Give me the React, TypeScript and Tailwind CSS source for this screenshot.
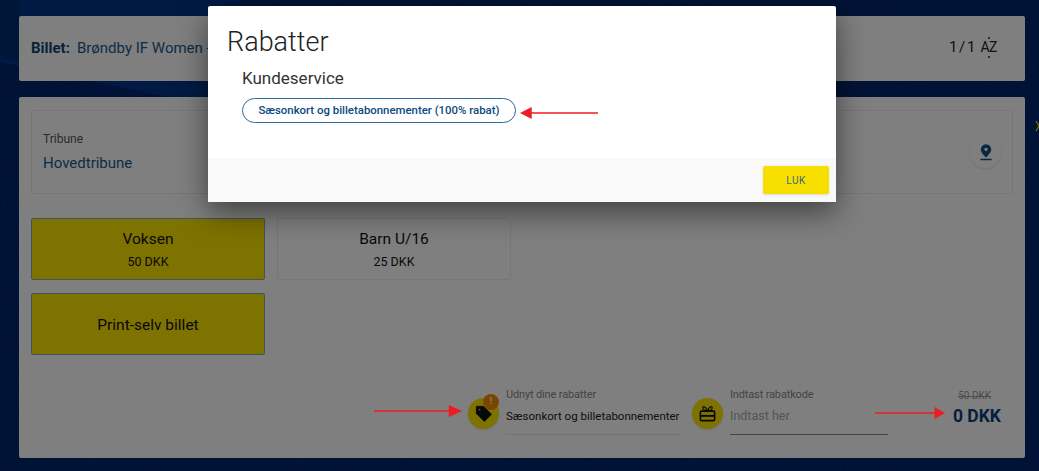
import React from 'react';

const font = "font-['Roboto','Liberation_Sans',sans-serif]";

const Arrow = ({ className, flip = false }: { className: string; flip?: boolean }) => (
  <svg
    viewBox="0 0 80 14"
    preserveAspectRatio="none"
    className={`absolute ${className}`}
    style={flip ? { transform: 'scaleX(-1)' } : undefined}
  >
    <path d="M0 6.2 L68 6.2 L68 1 L80 7 L68 13 L68 7.8 L0 7.8 Z" fill="#ed1c24" />
  </svg>
);

const TagIcon = () => (
  <svg viewBox="0 0 24 24" className="w-[19px] h-[19px]">
    <path
      fillRule="evenodd"
      d="M3 3 L12 3 L22 13 L13 22 L3 12 Z M7 5.600 a1.400 1.400 0 1 0 0.010 0 Z"
      fill="#111"
      stroke="#111"
      strokeWidth="1.2"
      strokeLinejoin="round"
    />
  </svg>
);

const GiftIcon = () => (
  <svg viewBox="0 0 24 24" className="w-[19px] h-[19px]" fill="none" stroke="#111" strokeWidth="2">
    <rect x="3" y="9" width="18" height="12" rx="1.5" />
    <path d="M3 15 H21" strokeWidth="2.4" />
    <path
      d="M12 8.500 C10 4 6.500 2 6 4.500 C5.700 7 9 8.500 12 8.500 C15 8.500 18.300 7 18 4.500 C17.500 2 14 4 12 8.500 Z"
      strokeWidth="1.500"
    />
  </svg>
);

const PinIcon = () => (
  <svg viewBox="0 0 24 24" className="w-[18px] h-[18px]">
    <path
      fillRule="evenodd"
      d="M12 1.5a7 7 0 0 0-7 7c0 4.7 7 10.5 7 10.5s7-5.800 7-10.500a7 7 0 0 0-7-7z M12 6.300a2.200 2.200 0 1 0 0.010 0z"
      fill="#14507f"
    />
    <path d="M4.500 22 H19.500" stroke="#14507f" strokeWidth="2" />
  </svg>
);

const TicketOption = ({ title, price, active }: { title: string; price?: string; active?: boolean }) => (
  <button
    className={`w-[234px] h-[62px] flex flex-col items-center justify-center rounded-[2px] border pt-[1px] ${
      active ? 'bg-[#fde400] border-[#80a8c0]' : 'bg-white border-[#ececec]'
    } text-[#111]`}
  >
    <span className="text-[15.5px] leading-5">{title}</span>
    {price && <span className="text-[12.5px] leading-4 mt-[5px]">{price}</span>}
  </button>
);

export default function App() {
  return (
    <div className={`${font} relative w-[1039px] h-[471px] overflow-hidden bg-[#002464]`}>
      {/* stadium photo behind the page, only seen along the edges */}
      <svg className="absolute inset-0 w-full h-full" viewBox="0 0 1039 471">
        <filter id="grain" colorInterpolationFilters="sRGB">
          <feTurbulence type="fractalNoise" baseFrequency="0.35 0.5" numOctaves="2" seed="4" />
          <feColorMatrix values="0 0 0 0 0  0 0 0 0 0.16  0 0 0 0 0.5  1.8 0 0 0 -0.6" />
        </filter>
        <rect width="1039" height="471" fill="#002464" />
        <rect width="1039" height="471" filter="url(#grain)" />
        <path d="M0 0 H240 V112 L0 62 Z" fill="#003588" />
        <path d="M0 0 H20 V62 L0 58 Z" fill="#002c70" />
      </svg>

      {/* page behind the dialog */}
      <div className="relative pl-[19px] pr-[14px] pt-4 flex flex-col gap-4">
        <div className="h-[65px] bg-white rounded-[2px] pl-3 pr-[28px] flex items-center justify-between">
          <div className="text-[15px] text-[#155a90]">
            <span className="font-bold text-[#0f4470]">Billet:</span>
            <span className="ml-[7px]">Brøndby IF Women -</span>
          </div>
          <div className="text-[15px] text-[#222] flex items-center gap-[5px] -mt-[3px]">
            <span className="[word-spacing:-2px]">1 / 1</span>
            <span className="relative text-[14px] tracking-[-0.5px]">
              AZ
              <span className="absolute left-[8px] top-0 w-[2px] h-[2px] rounded-full bg-[#222]" />
              <span className="absolute left-[8px] bottom-0 w-[2px] h-[2px] rounded-full bg-[#222]" />
            </span>
          </div>
        </div>

        <div className="h-[361px] bg-white rounded-[2px] px-3 pt-[13px] flex flex-col">
          <div className="h-[84px] shrink-0 border border-[#ececec] rounded-[2px] flex items-center justify-between pl-[11px] pr-[11px]">
            <div>
              <div className="text-[12px] text-[#555] leading-4">Tribune</div>
              <div className="text-[15px] text-[#155a90] leading-5 mt-[6px]">Hovedtribune</div>
            </div>
            <div className="w-[31px] h-[31px] rounded-full bg-white shadow flex items-center justify-center">
              <PinIcon />
            </div>
          </div>

          <div className="mt-6 flex gap-3">
            <TicketOption title="Voksen" price="50 DKK" active />
            <TicketOption title="Barn U/16" price="25 DKK" />
          </div>
          <div className="mt-[13px]">
            <TicketOption title="Print-selv billet" active />
          </div>

          <div className="mt-[36px] flex items-start justify-end pr-[12px]">
            <div className="relative w-[31px] h-[31px] mt-[7px] rounded-full bg-[#fde400] shadow flex items-center justify-center">
              <TagIcon />
              <span className="absolute -top-[4px] right-0 w-4 h-4 rounded-full bg-[#f28c00] text-white text-[9px] font-bold flex items-center justify-center">
                !
              </span>
            </div>
            <div className="ml-[7px] w-[174px]">
              <div className="text-[11px] tracking-[-0.15px] text-[#888] leading-4 -mt-[4px]">Udnyt dine rabatter</div>
              <div className="text-[11.5px] text-[#222] leading-4 mt-[5px] pb-[10px] border-b border-[#e8e8e8] whitespace-nowrap">
                Sæsonkort og billetabonnementer
              </div>
            </div>
            <div className="ml-[12px] w-[31px] h-[31px] mt-[7px] rounded-full bg-[#fde400] shadow flex items-center justify-center">
              <GiftIcon />
            </div>
            <div className="ml-[7px] w-[158px]">
              <div className="text-[11px] tracking-[-0.15px] text-[#888] leading-4 -mt-[4px]">Indtast rabatkode</div>
              <div className="text-[12.5px] text-[#aaa] leading-4 mt-[5px] pb-[10px] border-b border-[#888]">
                Indtast her
              </div>
            </div>
            <div className="w-[113px] text-right">
              <div className="text-[10px] text-[#999] line-through leading-3 -mt-[1px] pr-[10px]">50 DKK</div>
              <div className="text-[17.5px] font-bold text-[#0b3f78] leading-6 mt-[2px]">0 DKK</div>
            </div>
          </div>
        </div>
      </div>

      <svg viewBox="0 0 8 12" className="absolute left-[1035px] top-[120px] w-2 h-3">
        <path d="M1 1 L7 11 M7 1 L1 11" stroke="#fde400" strokeWidth="1.2" />
      </svg>

      {/* dialog */}
      <div className="absolute inset-0 bg-black/50 flex justify-center items-start pt-[6px] pl-[5px]">
        <div className="w-[628px] h-[196px] bg-white rounded-[2px] shadow-[0_10px_30px_rgba(0,0,0,0.5)] flex flex-col">
          <div className="flex-1 px-[19px] pt-[16px]">
            <h2 className="text-[27px] font-light leading-10 text-[#222]">Rabatter</h2>
            <div className="pl-[15px]">
              <h3 className="text-[17px] leading-6 text-[#333] mt-[4px]">Kundeservice</h3>
              <button className="mt-[8px] w-[274px] h-[25px] rounded-full border border-[#2d6a9a] text-[11.4px] font-medium text-[#0b4a80] whitespace-nowrap">
                Sæsonkort og billetabonnementer (100% rabat)
              </button>
            </div>
          </div>
          <div className="h-11 bg-[#f9f9f9] flex items-start justify-end pt-2 pr-[7px]">
            <button className="w-[66px] h-[28px] bg-[#f7e000] rounded-[2px] shadow text-[10px] tracking-[0.5px] text-[#3a6a70]">
              LUK
            </button>
          </div>
        </div>
      </div>

      {/* red annotation arrows */}
      <Arrow className="left-[520px] top-[106px] w-[78px] h-[14px]" flip />
      <Arrow className="left-[374px] top-[404px] w-[88px] h-[14px]" />
      <Arrow className="left-[875px] top-[406px] w-[70px] h-[14px]" />
    </div>
  );
}
